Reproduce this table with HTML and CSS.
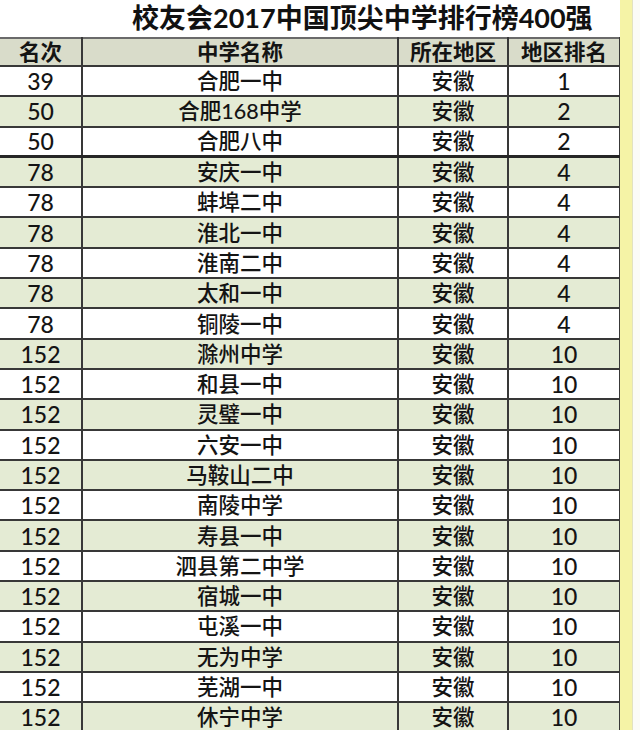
FILE: index.html
```html
<!DOCTYPE html>
<html lang="zh-CN">
<head>
<meta charset="utf-8">
<title>校友会2017中国顶尖中学排行榜400强</title>
<link rel="stylesheet" href="styles.css">
</head>
<body>
<div class="page">
  <div class="sheet">
    <h1 class="title">校友会2017中国顶尖中学排行榜400强</h1>
    <table class="rank">
      <colgroup>
        <col class="c1"><col class="c2"><col class="c3"><col class="c4">
      </colgroup>
      <thead>
        <tr><th>名次</th><th>中学名称</th><th>所在地区</th><th>地区排名</th></tr>
      </thead>
      <tbody>
        <tr><td>39</td><td>合肥一中</td><td>安徽</td><td>1</td></tr>
        <tr class="g"><td>50</td><td>合肥168中学</td><td>安徽</td><td>2</td></tr>
        <tr class="sep"><td>50</td><td>合肥八中</td><td>安徽</td><td>2</td></tr>
        <tr class="g"><td>78</td><td>安庆一中</td><td>安徽</td><td>4</td></tr>
        <tr><td>78</td><td>蚌埠二中</td><td>安徽</td><td>4</td></tr>
        <tr class="g"><td>78</td><td>淮北一中</td><td>安徽</td><td>4</td></tr>
        <tr><td>78</td><td>淮南二中</td><td>安徽</td><td>4</td></tr>
        <tr class="g"><td>78</td><td>太和一中</td><td>安徽</td><td>4</td></tr>
        <tr><td>78</td><td>铜陵一中</td><td>安徽</td><td>4</td></tr>
        <tr class="g"><td>152</td><td>滁州中学</td><td>安徽</td><td>10</td></tr>
        <tr><td>152</td><td>和县一中</td><td>安徽</td><td>10</td></tr>
        <tr class="g"><td>152</td><td>灵璧一中</td><td>安徽</td><td>10</td></tr>
        <tr><td>152</td><td>六安一中</td><td>安徽</td><td>10</td></tr>
        <tr class="g"><td>152</td><td>马鞍山二中</td><td>安徽</td><td>10</td></tr>
        <tr><td>152</td><td>南陵中学</td><td>安徽</td><td>10</td></tr>
        <tr class="g"><td>152</td><td>寿县一中</td><td>安徽</td><td>10</td></tr>
        <tr><td>152</td><td>泗县第二中学</td><td>安徽</td><td>10</td></tr>
        <tr class="g"><td>152</td><td>宿城一中</td><td>安徽</td><td>10</td></tr>
        <tr><td>152</td><td>屯溪一中</td><td>安徽</td><td>10</td></tr>
        <tr class="g"><td>152</td><td>无为中学</td><td>安徽</td><td>10</td></tr>
        <tr><td>152</td><td>芜湖一中</td><td>安徽</td><td>10</td></tr>
        <tr class="g"><td>152</td><td>休宁中学</td><td>安徽</td><td>10</td></tr>
      </tbody>
    </table>
  </div>
  <div class="stripe"></div>
  <div class="rest"></div>
</div>
</body>
</html>
```

FILE: styles.css
```css
html, body {
  margin: 0;
  padding: 0;
  background: #ffffff;
}
body {
  width: 640px;
  height: 730px;
  overflow: hidden;
  font-family: "Lato", "Noto Sans CJK SC", sans-serif;
  color: #141414;
}
.page {
  display: flex;
  height: 730px;
}
.sheet {
  width: 620px;
  flex: none;
}
.stripe {
  width: 12px;
  flex: none;
  background: #f5f3a6;
}
.rest {
  flex: 1;
  background: #fbfbf6;
  border-left: 1px solid #e2e2c0;
}
.title {
  margin: 0;
  height: 37px;
  box-sizing: border-box;
  padding-left: 132px;
  font-size: 27px;
  line-height: 36px;
  font-weight: 700;
  white-space: nowrap;
  color: #111;
}
.rank {
  border-collapse: collapse;
  table-layout: fixed;
  width: 620px;
}
.c1 { width: 82px; }
.c2 { width: 316px; }
.c3 { width: 110px; }
.c4 { width: 112px; }
.rank th,
.rank td {
  padding: 0;
  text-align: center;
  border: 2px solid #383838;
  white-space: nowrap;
  font-size: 21.5px;
  line-height: 26px;
  font-weight: 500;
}
.rank th:first-child,
.rank td:first-child {
  border-left: none;
}
.rank thead tr {
  height: 28px;
  background: #d9dcca;
}
.rank th {
  font-weight: 700;
  border-top: 2px solid #6a6a6a;
}
.rank tbody tr {
  height: 30.3px;
  background: #ffffff;
}
.rank tbody tr.g {
  background: #e4ebd4;
}
.rank tbody tr.sep td {
  border-bottom: 3px solid #262626;
}
.rank td:first-child,
.rank td:last-child {
  font-size: 23px;
}
```
